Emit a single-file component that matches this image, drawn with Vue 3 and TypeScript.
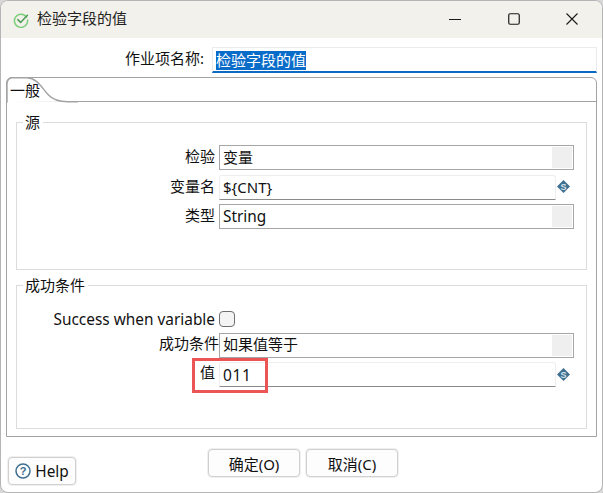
<script setup lang="ts">
interface Row { label: string; value: string; kind: 'combo' | 'input'; latin?: boolean }
const sourceRows: Row[] = [
  { label: '检验', value: '变量', kind: 'combo' },
  { label: '变量名', value: '${CNT}', kind: 'input' },
  { label: '类型', value: 'String', kind: 'combo', latin: true },
]
</script>

<template>
  <div class="window">
    <header class="titlebar">
      <svg class="app-icon" width="16" height="16" viewBox="0 0 16 16" fill="none">
        <path d="M13.6 5.2A6.6 6.6 0 1 0 14.6 8" stroke="#7ccf78" stroke-width="1.5" stroke-linecap="round" />
        <path d="M4.8 7.6 7.6 10.4 14.4 3.2" stroke="#4f9a55" stroke-width="1.5" stroke-linecap="round" stroke-linejoin="round" />
      </svg>
      <span class="title">检验字段的值</span>
      <div class="win-controls">
        <svg width="12" height="12" viewBox="0 0 12 12"><path d="M0 6.5H12" stroke="#1a1a1a" stroke-width="1" /></svg>
        <svg width="12" height="12" viewBox="0 0 12 12" fill="none"><rect x=".75" y=".75" width="10.5" height="10.5" rx="1.5" stroke="#1a1a1a" stroke-width="1.2" /></svg>
        <svg width="12" height="12" viewBox="0 0 12 12" fill="none"><path d="M.5.5 11.5 11.5M11.5.5.5 11.5" stroke="#1a1a1a" stroke-width="1.1" /></svg>
      </div>
    </header>

    <div class="name-row">
      <label class="name-label">作业项名称:</label>
      <div class="name-input"><span class="selected">检验字段的值</span></div>
    </div>

    <section class="panel">
      <div class="tabbar">
        <svg class="tab-shape" width="72" height="26" viewBox="0 0 72 26" fill="none">
          <path d="M0 25H1V7Q1 1.5 6 0.7H21C31 1 36 11 42 17.5Q48 24.5 62 24.8H72" stroke="#a3a3a3" stroke-width="1.4" fill="#fff" />
        </svg>
        <span class="tab-label">一般</span>
      </div>
      <div class="panel-body">
        <fieldset class="group group-source">
          <legend>源</legend>
          <div class="form">
            <div v-for="row in sourceRows" :key="row.label" class="row">
              <label class="row-label">{{ row.label }}</label>
              <div v-if="row.kind === 'combo'" class="combo">
                <span :class="{ latin: row.latin }">{{ row.value }}</span><i class="combo-btn"></i>
              </div>
              <template v-else>
                <div class="text-input">{{ row.value }}</div>
                <svg class="var-icon" width="13" height="13" viewBox="0 0 13 13">
                  <path d="M6.5 0 13 6.5 6.5 13 0 6.5Z" fill="#3f6f91" />
                  <text x="6.5" y="9.8" text-anchor="middle" font-size="9" font-weight="700" font-family="Liberation Sans" fill="#d6e2ea">S</text>
                </svg>
              </template>
            </div>
          </div>
        </fieldset>

        <fieldset class="group group-success">
          <legend>成功条件</legend>
          <div class="form">
            <div class="row row-check">
              <label class="row-label latin">Success when variable</label>
              <i class="checkbox"></i>
            </div>
            <div class="row row-cond">
              <label class="row-label">成功条件</label>
              <div class="combo"><span>如果值等于</span><i class="combo-btn"></i></div>
            </div>
            <div class="row row-value">
              <label class="row-label">值</label>
              <div class="text-input"><span class="number">011</span></div>
              <svg class="var-icon" width="13" height="13" viewBox="0 0 13 13">
                <path d="M6.5 0 13 6.5 6.5 13 0 6.5Z" fill="#3f6f91" />
                <text x="6.5" y="9.8" text-anchor="middle" font-size="9" font-weight="700" font-family="Liberation Sans" fill="#d6e2ea">S</text>
              </svg>
              <span class="highlight"></span>
            </div>
          </div>
        </fieldset>
      </div>
    </section>

    <footer class="footer">
      <button class="btn help">
        <svg width="16" height="16" viewBox="0 0 16 16" fill="none">
          <circle cx="8" cy="8" r="7" stroke="#3f6f91" stroke-width="1.5" />
          <text x="8" y="12" text-anchor="middle" font-size="11" font-weight="700" font-family="Liberation Sans" fill="#3f6f91">?</text>
        </svg>
        <span class="latin">Help</span>
      </button>
      <div class="actions">
        <button class="btn action">确定(O)</button>
        <button class="btn action">取消(C)</button>
      </div>
    </footer>
  </div>
</template>

<style>
html, body { margin: 0; background: #d8d8d8; }
</style>

<style scoped>
.window {
  width: 603px;
  height: 493px;
  box-sizing: border-box;
  display: flex;
  flex-direction: column;
  background: #fff;
  border: 1px solid #b5b5b5;
  border-radius: 8px;
  overflow: hidden;
  font-family: "Noto Sans", "Noto Sans CJK SC", sans-serif;
  font-size: 15px;
  color: #111;
}
.latin { font-size: 15.4px; }
.number { font-size: 15.5px; letter-spacing: 0.6px; position: relative; top: 1px; }
.titlebar {
  height: 37px;
  flex: none;
  display: flex;
  align-items: center;
  padding-left: 12px;
  background: #f3f1ec;
}
.app-icon { margin-right: 8px; }
.title { font-size: 15px; color: #222; line-height: 20px; margin-bottom: 3px; }
.win-controls {
  margin-left: auto;
  margin-right: 24px;
  margin-bottom: 2px;
  display: flex;
  gap: 46.5px;
}
.name-row {
  display: flex;
  align-items: center;
  height: 26px;
  margin-top: 9px;
}
.name-label {
  width: 203px;
  text-align: right;
  white-space: nowrap;
  line-height: 20px;
  margin-top: -5px;
}
.name-input {
  margin-left: 8px;
  width: 385px;
  height: 26px;
  box-sizing: border-box;
  border: 1px solid #e9ecef;
  border-bottom: 2px solid #0a69c0;
  padding: 3px 0 0 3px;
  line-height: 18px;
}
.selected { background: #0a6cc9; color: #fff; display: inline-block; height: 19px; }
.panel {
  margin: 4px 5px 0 5px;
  height: 360px;
  box-sizing: border-box;
  border: 1.5px solid #a3a3a3;
  border-radius: 6px 6px 0 0;
  display: flex;
  flex-direction: column;
  position: relative;
}
.tabbar {
  height: 24px;
  flex: none;
  box-sizing: border-box;
  border-bottom: 1.5px solid #a3a3a3;
  position: relative;
}
.tab-shape {
  position: absolute;
  left: -1.5px;
  top: -1.5px;
}
.tab-label {
  position: absolute;
  left: 3px;
  top: 2px;
  line-height: 20px;
}
.panel-body {
  flex: 1;
  padding: 10px 9px 0 9px;
  display: flex;
  flex-direction: column;
  gap: 5px;
}
.group {
  margin: 0;
  padding: 0;
  border: 1px solid #dcdcdc;
  min-width: 0;
  box-sizing: border-box;
}
.group legend {
  margin-left: 6px;
  padding: 0 3px 0 2px;
  line-height: 20px;
}
.group-source { height: 158px; }
.group-success { height: 154px; }
.form {
  display: flex;
  flex-direction: column;
  gap: 4.5px;
  padding-left: 202px;
}
.group-source .form { padding-top: 13px; }
.group-success .form { padding-top: 16px; gap: 4px; }
.row {
  position: relative;
  display: flex;
  align-items: center;
  height: 25px;
}
.row-check { height: 16px; margin-bottom: 2px; }
.row-label {
  position: absolute;
  right: calc(100% + 4px);
  top: 0;
  white-space: nowrap;
  line-height: 22px;
}
.row-check .row-label { top: -2px; }
.row-cond .row-label { right: 100%; top: -1px; }
.combo {
  width: 355px;
  height: 25px;
  box-sizing: border-box;
  border: 1px solid #a6a6a6;
  padding-left: 3px;
  display: flex;
  justify-content: space-between;
  line-height: 23px;
}
.row-cond .combo { line-height: 21px; }
.combo-btn {
  width: 20px;
  height: 21px;
  margin: 1px;
  background: #efefef;
}
.text-input {
  width: 337px;
  height: 25px;
  box-sizing: border-box;
  border: 1px solid #eeeeee;
  border-bottom: 1px solid #8a8a8a;
  border-radius: 3px 3px 0 0;
  padding-left: 3px;
  line-height: 23px;
}
.var-icon { margin-left: 1px; margin-bottom: 1px; }
.checkbox {
  width: 16px;
  height: 16px;
  box-sizing: border-box;
  border: 1px solid #6f6f6f;
  border-radius: 4px;
  background: #f4f4f4;
}
.row-value .row-label { top: -1px; }
.highlight {
  position: absolute;
  left: -27px;
  top: -4px;
  width: 76px;
  height: 35px;
  box-sizing: border-box;
  border: 3px solid #ec5555;
}
.footer {
  flex: 1;
  position: relative;
  display: flex;
  justify-content: space-between;
  align-items: flex-start;
  padding-left: 7px;
}
.btn {
  font: inherit;
  color: #111;
  background: #fdfdfd;
  border: 1px solid #d0d0d0;
  border-radius: 4px;
  box-shadow: 0 0 0 1px #f0f0f0;
  padding: 0;
}
.help {
  margin-top: 20px;
  width: 68px;
  height: 28px;
  display: flex;
  align-items: center;
  justify-content: center;
  gap: 4px;
}
.actions {
  display: flex;
  gap: 6px;
  margin-top: 12px;
  margin-right: 204px;
}
.action { width: 92px; height: 28px; }
</style>
